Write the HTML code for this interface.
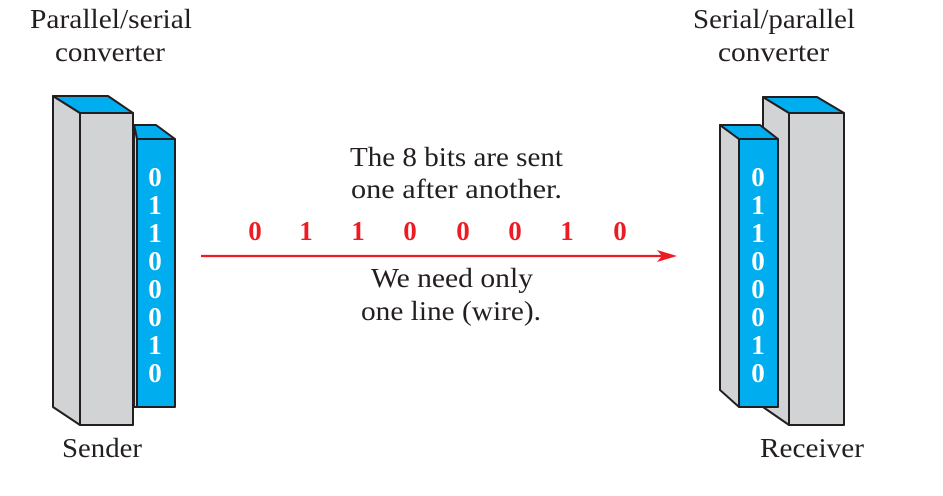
<!DOCTYPE html>
<html><head><meta charset="utf-8"><style>
html,body{margin:0;padding:0;background:#fff;}
svg{display:block;}
text{font-family:"Liberation Serif",serif;}
</style></head><body>
<svg width="943" height="496" viewBox="0 0 943 496" xmlns="http://www.w3.org/2000/svg">
<g stroke="#231f20" stroke-width="2" stroke-linejoin="round">
<polygon points="53,96 80,113 80,425 53,407" fill="#d1d3d4"/>
<polygon points="53,96 108,96 133,113 80,113" fill="#00aeef"/>
<rect x="80" y="113" width="53" height="312" fill="#d1d3d4"/>
<polygon points="134,125 156,125 175,139 137,139" fill="#00aeef"/>
<polygon points="134,125 137,139 137,407 134,407" fill="#d1d3d4"/>
<rect x="137" y="139" width="38" height="268" fill="#00aeef"/>
<polygon points="763,97 789,113 789,425 763,407" fill="#d1d3d4"/>
<polygon points="763,97 817,97 844,113 789,113" fill="#00aeef"/>
<rect x="789" y="113" width="55" height="312" fill="#d1d3d4"/>
<polygon points="720,125 739,139 739,407 720,390" fill="#d1d3d4"/>
<polygon points="720,125 760,125 778,139 739,139" fill="#00aeef"/>
<rect x="739" y="139" width="39" height="268" fill="#00aeef"/>
</g>
<g fill="#fff" font-weight="bold" font-size="27" text-anchor="middle">
<text x="155" y="186">0</text><text x="155" y="214">1</text><text x="155" y="242">1</text><text x="155" y="270">0</text><text x="155" y="298">0</text><text x="155" y="326">0</text><text x="155" y="354">1</text><text x="155" y="382">0</text>
<text x="758" y="186">0</text><text x="758" y="214">1</text><text x="758" y="242">1</text><text x="758" y="270">0</text><text x="758" y="298">0</text><text x="758" y="326">0</text><text x="758" y="354">1</text><text x="758" y="382">0</text>
</g>
<g fill="#ed1c24" font-weight="bold" font-size="27" text-anchor="middle">
<text x="255" y="240">0</text><text x="306" y="240">1</text><text x="358" y="240">1</text><text x="410" y="240">0</text><text x="463" y="240">0</text><text x="515" y="240">0</text><text x="567" y="240">1</text><text x="620" y="240">0</text>
</g>
<line x1="201" y1="256" x2="665" y2="256" stroke="#ed1c24" stroke-width="2.2"/>
<polygon points="677,256 657,250 662,256 657,262" fill="#ed1c24"/>
<g fill="#231f20" font-size="27">
<text x="350" y="166" textLength="213" lengthAdjust="spacingAndGlyphs">The 8 bits are sent</text>
<text x="351" y="198" textLength="211" lengthAdjust="spacingAndGlyphs">one after another.</text>
<text x="371" y="287" textLength="162" lengthAdjust="spacingAndGlyphs">We need only</text>
<text x="361" y="320" textLength="180" lengthAdjust="spacingAndGlyphs">one line (wire).</text>
<text x="30" y="28" textLength="162" lengthAdjust="spacingAndGlyphs">Parallel/serial</text>
<text x="55" y="61" textLength="110" lengthAdjust="spacingAndGlyphs">converter</text>
<text x="693" y="28" textLength="162" lengthAdjust="spacingAndGlyphs">Serial/parallel</text>
<text x="718" y="61" textLength="111" lengthAdjust="spacingAndGlyphs">converter</text>
<text x="62" y="457" textLength="80" lengthAdjust="spacingAndGlyphs">Sender</text>
<text x="760" y="457" textLength="104" lengthAdjust="spacingAndGlyphs">Receiver</text>
</g>
</svg>
</body></html>
